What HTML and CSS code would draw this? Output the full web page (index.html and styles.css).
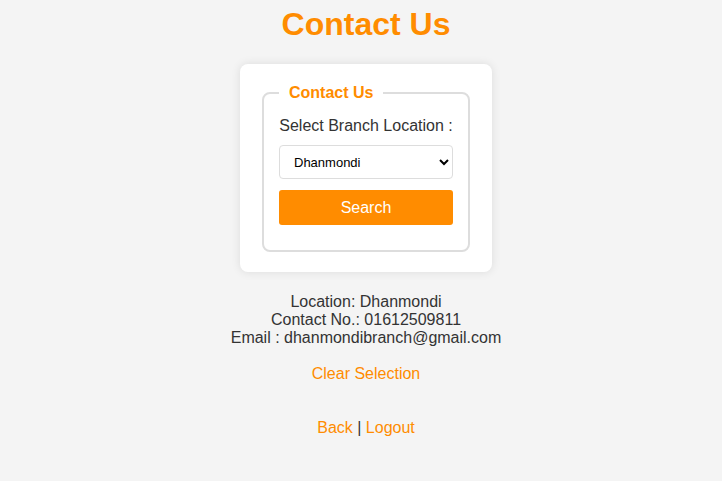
FILE: index.html
```html
<!DOCTYPE html>
<html>
<head>
<meta charset="utf-8">
<link rel="stylesheet" href="styles.css">
</head>
<body>
<h1 class="title">Contact Us</h1>
<div class="card">
  <fieldset class="box">
    <legend class="legend">Contact Us</legend>
    <label class="label" for="branch">Select Branch Location :</label>
    <select class="select" id="branch">
      <option>Dhanmondi</option>
    </select>
    <button class="btn">Search</button>
  </fieldset>
</div>
<div class="info">
  <div>Location: Dhanmondi</div>
  <div>Contact No.: 01612509811</div>
  <div>Email : dhanmondibranch@gmail.com</div>
</div>
<div class="clear"><a href="#">Clear Selection</a></div>
<div class="nav"><a href="#">Back</a> | <a href="#">Logout</a></div>
</body>
</html>
```
FILE: styles.css
```css
html, body {
  margin: 0;
  padding: 0;
  background: #f4f4f4;
  font-family: "Liberation Sans", Arial, sans-serif;
  color: #333;
}
body {
  display: flex;
  flex-direction: column;
  align-items: center;
  padding-left: 10px;
}
.title {
  margin: 6px 0 0;
  font-size: 32px;
  line-height: 37px;
  color: #ff8c00;
  font-weight: bold;
}
.card {
  margin-top: 21px;
  width: 252px;
  box-sizing: border-box;
  background: #fff;
  border-radius: 8px;
  padding: 20px;
  box-shadow: 0 0 10px rgba(0,0,0,0.1);
}
.box {
  margin: 0 2px 0 2px;
  border: 2px solid #ddd;
  border-radius: 8px;
  padding: 15px 15px 25px;
  display: flex;
  flex-direction: column;
}
.legend {
  color: #ff8c00;
  font-weight: bold;
  font-size: 16px;
  padding: 0 10px;
  margin-left: 0;
}
.label {
  font-size: 16px;
  line-height: 18px;
  text-align: center;
  color: #333;
  margin-bottom: 10px;
}
.select {
  height: 34px;
  border: 1px solid #ddd;
  border-radius: 4px;
  background: #fff;
  font-family: "Liberation Sans", Arial, sans-serif;
  font-size: 13px;
  padding: 0 10px;
  color: #000;
}
.btn {
  margin-top: 11px;
  height: 35px;
  border: none;
  border-radius: 3px;
  background: #ff8c00;
  color: #fff;
  font-family: "Liberation Sans", Arial, sans-serif;
  font-size: 16px;
}
.info {
  margin-top: 21px;
  text-align: center;
  font-size: 16px;
  line-height: 18px;
  color: #333;
}
.clear {
  margin-top: 18px;
  font-size: 16px;
  line-height: 18px;
}
.nav {
  margin-top: 36px;
  font-size: 16px;
  line-height: 18px;
  color: #333;
}
a {
  color: #ff8c00;
  text-decoration: none;
}
```
